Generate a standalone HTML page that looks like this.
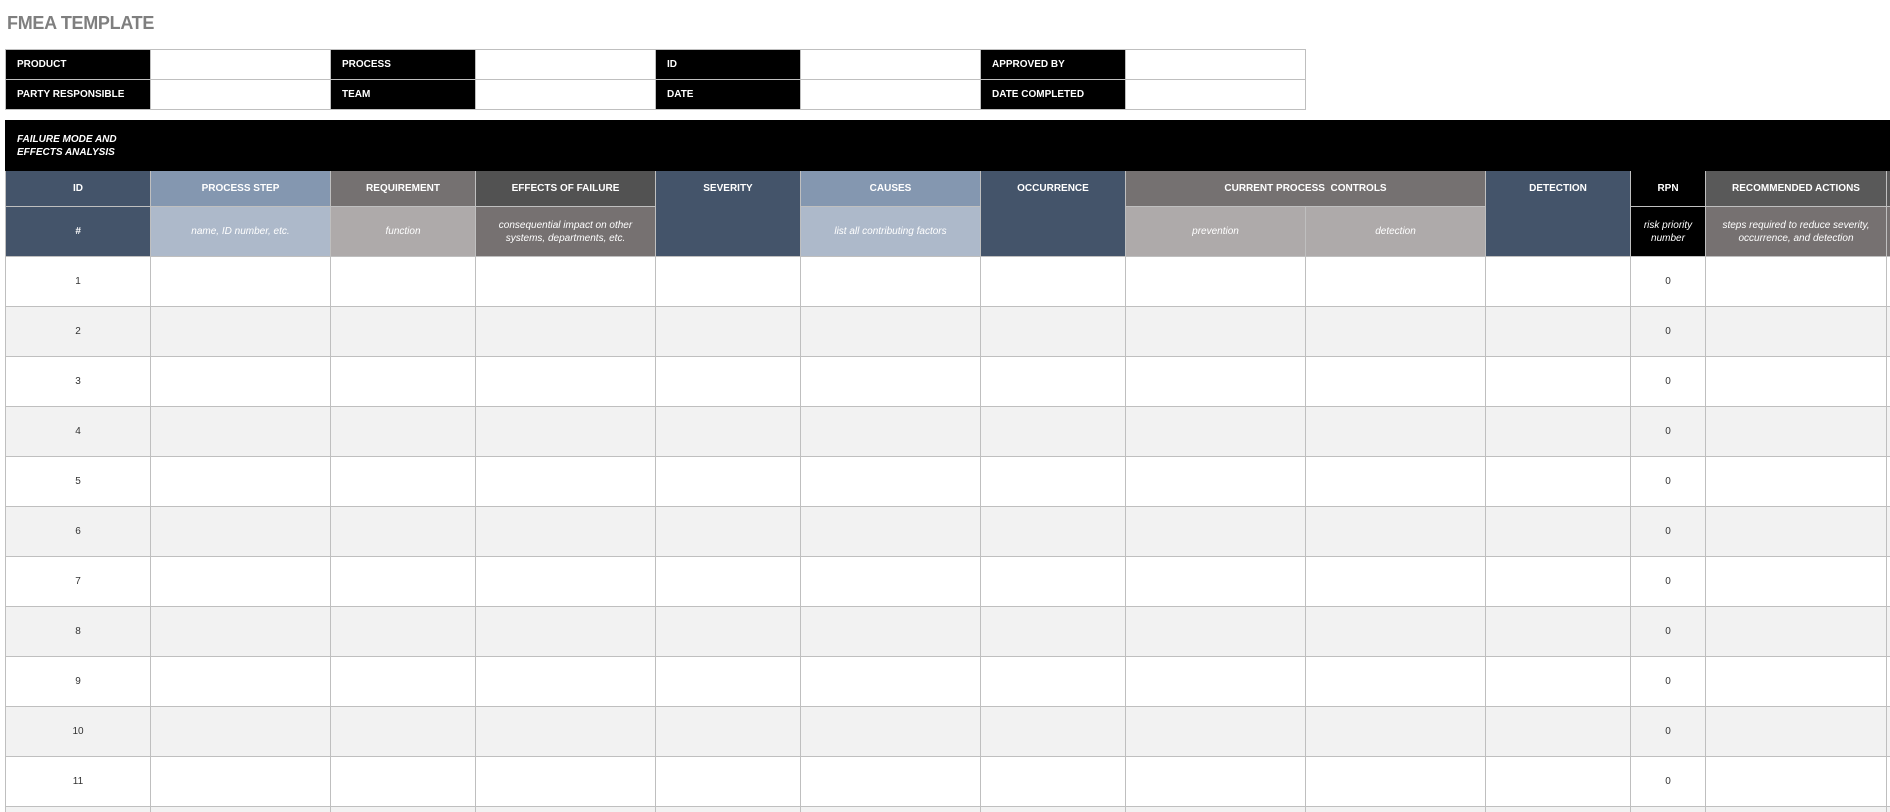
<!DOCTYPE html>
<html><head><meta charset="utf-8"><style>
*{margin:0;padding:0;box-sizing:border-box}
html,body{width:1890px;height:812px;overflow:hidden}
body{background:#fff;font-family:"Liberation Sans",sans-serif}
#wrap{position:relative;width:1890px;height:812px;overflow:hidden}
.title{position:absolute;left:7px;top:13px;font-size:18px;font-weight:bold;color:#7f7f7f;letter-spacing:-0.3px}
table{border-collapse:collapse;table-layout:fixed;position:absolute}
td{border:1px solid #bfbfbf;font-size:10px;color:#fff;overflow:hidden}
#top{left:5px;top:49px;width:1300px}
#top td{height:30px}
#top .l{background:#000;font-weight:bold;padding-left:11px}
#top .v{background:#fff}
#main{left:5px;top:120px;width:1941px}
.band td{background:#000;height:50px;font-weight:bold;font-style:italic;padding-left:11px;line-height:13px;border-color:#000}
.h1 td{height:36px;text-align:center;font-weight:bold}
.h2 td{height:50px;text-align:center;font-style:italic;line-height:13px}
.d td{height:50px;text-align:center;color:#333}
.d.g td{background:#f2f2f2}
.s{background:#44546a}
.ps{background:#8497b0}.ps2{background:#adb9ca}
.rq{background:#757171}.rq2{background:#aeaaaa}
.ef{background:#525252}.ef2{background:#767171}
.rpn{background:#000}
.ra{background:#595959}.ra2{background:#767171}
</style></head><body><div id="wrap">
<div class="title">FMEA TEMPLATE</div>
<table id="top">
<colgroup><col style="width:145px"><col style="width:180px"><col style="width:145px"><col style="width:180px"><col style="width:145px"><col style="width:180px"><col style="width:145px"><col style="width:180px"></colgroup>
<tr><td class="l">PRODUCT</td><td class="v"></td><td class="l">PROCESS</td><td class="v"></td><td class="l">ID</td><td class="v"></td><td class="l">APPROVED BY</td><td class="v"></td></tr>
<tr><td class="l">PARTY RESPONSIBLE</td><td class="v"></td><td class="l">TEAM</td><td class="v"></td><td class="l">DATE</td><td class="v"></td><td class="l">DATE COMPLETED</td><td class="v"></td></tr>
</table>
<table id="main">
<colgroup><col style="width:145px"><col style="width:180px"><col style="width:145px"><col style="width:180px"><col style="width:145px"><col style="width:180px"><col style="width:145px"><col style="width:180px"><col style="width:180px"><col style="width:145px"><col style="width:75px"><col style="width:181px"><col style="width:60px"></colgroup>
<tr class="band"><td colspan="13">FAILURE MODE AND<br>EFFECTS ANALYSIS</td></tr>
<tr class="h1"><td class="s">ID</td><td class="ps">PROCESS STEP</td><td class="rq">REQUIREMENT</td><td class="ef">EFFECTS OF FAILURE</td><td class="s" rowspan="2" style="vertical-align:top;padding-top:12px">SEVERITY</td><td class="ps">CAUSES</td><td class="s" rowspan="2" style="vertical-align:top;padding-top:12px">OCCURRENCE</td><td class="rq" colspan="2">CURRENT PROCESS&nbsp;&nbsp;CONTROLS</td><td class="s" rowspan="2" style="vertical-align:top;padding-top:12px">DETECTION</td><td class="rpn">RPN</td><td class="ra">RECOMMENDED ACTIONS</td><td class="ra"></td></tr>
<tr class="h2"><td class="s" style="font-weight:bold">#</td><td class="ps2">name, ID number, etc.</td><td class="rq2">function</td><td class="ef2">consequential impact on other<br>systems, departments, etc.</td><td class="ps2">list all contributing factors</td><td class="rq2">prevention</td><td class="rq2">detection</td><td class="rpn">risk priority<br>number</td><td class="ra2">steps required to reduce severity,<br>occurrence, and detection</td><td class="ra2"></td></tr>
<tr class="d"><td>1</td><td></td><td></td><td></td><td></td><td></td><td></td><td></td><td></td><td></td><td>0</td><td></td><td></td></tr>
<tr class="d g"><td>2</td><td></td><td></td><td></td><td></td><td></td><td></td><td></td><td></td><td></td><td>0</td><td></td><td></td></tr>
<tr class="d"><td>3</td><td></td><td></td><td></td><td></td><td></td><td></td><td></td><td></td><td></td><td>0</td><td></td><td></td></tr>
<tr class="d g"><td>4</td><td></td><td></td><td></td><td></td><td></td><td></td><td></td><td></td><td></td><td>0</td><td></td><td></td></tr>
<tr class="d"><td>5</td><td></td><td></td><td></td><td></td><td></td><td></td><td></td><td></td><td></td><td>0</td><td></td><td></td></tr>
<tr class="d g"><td>6</td><td></td><td></td><td></td><td></td><td></td><td></td><td></td><td></td><td></td><td>0</td><td></td><td></td></tr>
<tr class="d"><td>7</td><td></td><td></td><td></td><td></td><td></td><td></td><td></td><td></td><td></td><td>0</td><td></td><td></td></tr>
<tr class="d g"><td>8</td><td></td><td></td><td></td><td></td><td></td><td></td><td></td><td></td><td></td><td>0</td><td></td><td></td></tr>
<tr class="d"><td>9</td><td></td><td></td><td></td><td></td><td></td><td></td><td></td><td></td><td></td><td>0</td><td></td><td></td></tr>
<tr class="d g"><td>10</td><td></td><td></td><td></td><td></td><td></td><td></td><td></td><td></td><td></td><td>0</td><td></td><td></td></tr>
<tr class="d"><td>11</td><td></td><td></td><td></td><td></td><td></td><td></td><td></td><td></td><td></td><td>0</td><td></td><td></td></tr>
<tr class="d g"><td>12</td><td></td><td></td><td></td><td></td><td></td><td></td><td></td><td></td><td></td><td>0</td><td></td><td></td></tr>
</table>
</div></body></html>
